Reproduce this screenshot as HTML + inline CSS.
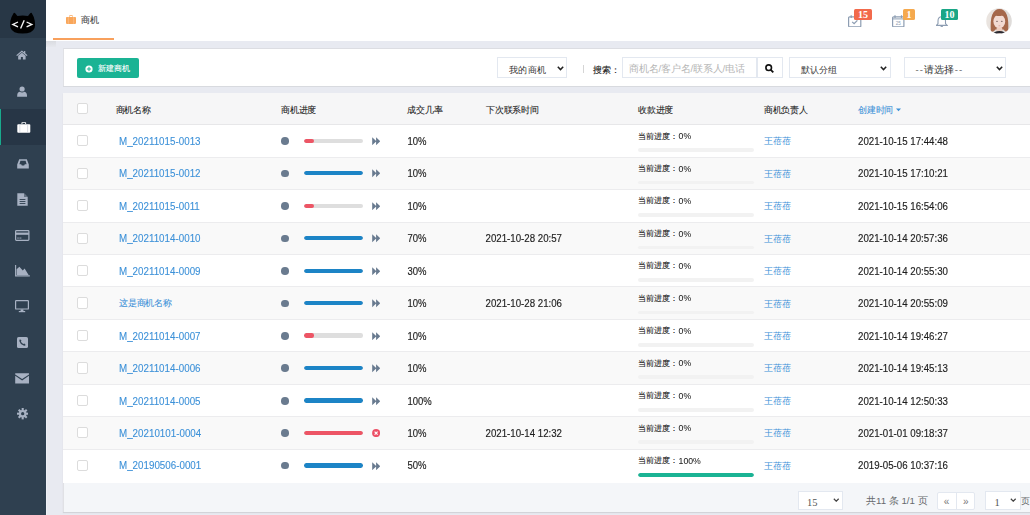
<!DOCTYPE html>
<html><head><meta charset="utf-8">
<style>
*{box-sizing:border-box;margin:0;padding:0}
html,body{width:1030px;height:515px;overflow:hidden}
body{position:relative;background:#e8eaf1;font-family:"Liberation Sans",sans-serif;color:#333;}
.abs{position:absolute}
#side{position:absolute;left:0;top:0;width:46px;height:515px;background:#2f4050}
#logo{position:absolute;left:0;top:0;width:46px;height:38px;background:#283746}
#active{position:absolute;left:0;top:108.8px;width:46px;height:36.4px;background:#273646;border-left:1.2px solid #19aa8d}
#side svg{position:absolute}
#sideline{position:absolute;left:46px;top:40px;width:1px;height:475px;background:#eff1f6}
#header{position:absolute;left:46px;top:0;width:984px;height:40.5px;background:#fff}
#tabline{position:absolute;left:53px;top:38px;width:60.5px;height:1.8px;background:#f8a05c}
#tabtxt{position:absolute;left:81px;top:13.6px;font-size:9.3px;line-height:12px;color:#4a4a4a;-webkit-text-stroke:0.12px}
.badge{position:absolute;height:10.5px;top:9.3px;border-radius:1.5px;color:#fff;font-family:"Liberation Serif",serif;font-weight:bold;font-size:10px;line-height:11.2px;text-align:center}
#shade{position:absolute;left:46px;top:40.5px;width:10px;height:6px;background:linear-gradient(#d9dbe0,#e6e8ee)}
.panel{position:absolute;left:63px;background:#fff;border-top:1px solid #dcdde2;border-left:1px solid #e0e1e5}
#toolbar{top:48px;width:980px;height:38px;box-shadow:0 1px 0 #d8dadf}
#btn{position:absolute;left:77px;top:58.1px;width:62px;height:20px;background:#1ab394;border-radius:2px}
#btntxt{position:absolute;left:98px;top:63.5px;font-size:8.15px;line-height:10px;color:#fff;-webkit-text-stroke:0.1px}
.sel{position:absolute;top:57.2px;height:21.2px;background:#fff;border:1px solid #e3e8f0}
.seltxt{position:absolute;font-size:9.4px;letter-spacing:0.3px;line-height:12px;color:#333}
.chev{position:absolute}
s{text-decoration:none;padding:0 0.2px}
s.d{padding:0;letter-spacing:1px;color:#666}
#tbl{top:93px;width:980px;height:419px;box-shadow:0 1px 1px #d2d4d9}
#thead{position:absolute;left:63px;top:93px;width:967px;height:31.7px;background:#f6f6f7;border-bottom:1px solid #e7e7e9}
.th{position:absolute;top:104.5px;font-size:9px;letter-spacing:-0.25px;line-height:10px;color:#1a1a1a;-webkit-text-stroke:0.08px}
.row{position:absolute;left:63px;width:967px;height:32.46px;border-bottom:1px solid #ececee}
.sy{transform:scaleY(1.1);transform-origin:0 0}
.row>*{position:absolute}
.cb{position:absolute;width:11.2px;height:11.2px;border:1px solid #dcdcdc;border-radius:2px;background:#fff}
.row .cb{left:14px;top:10px}
.nm{left:56px;top:9.7px;font-size:9.8px;line-height:12px;color:#3d91d8;-webkit-text-stroke:0.1px}
.nm.cn{font-size:9px;letter-spacing:-0.25px;-webkit-text-stroke:0.08px;top:9.5px}
.dot{left:218px;top:12.1px;width:7.6px;height:7.6px;border-radius:50%;background:#6a7b8f}
.track{left:241.3px;top:13.6px;width:58.4px;height:4.3px;border-radius:2.2px;background:#dedede;overflow:hidden}
.track b,.ptrack b{display:block;height:100%;border-radius:2.2px}
.ic{left:308.7px;top:11.8px;width:8.4px;height:8.4px}
.rate{left:344.5px;top:9.7px;font-size:9.5px;line-height:12px;color:#1e1e1e;-webkit-text-stroke:0.15px}
.nxt{left:422.5px;top:9.7px;font-size:9.7px;line-height:12px;color:#1e1e1e;-webkit-text-stroke:0.15px}
.payn{left:615.6px;top:5px;font-size:8.7px;line-height:10px;color:#222;transform:scaleY(1.12);transform-origin:0 0;-webkit-text-stroke:0.05px}
.pay{left:575px;top:6.4px;font-size:8px;line-height:10px;color:#222;-webkit-text-stroke:0.1px}
.ptrack{left:575px;top:23.1px;width:116px;height:3.8px;border-radius:2px;background:#f2f2f2;overflow:hidden}
.own{left:700.5px;top:11.1px;font-size:8.6px;line-height:10px;color:#3d91d8}
.ctime{left:795px;top:9.7px;font-size:9.7px;line-height:12px;color:#1e1e1e;-webkit-text-stroke:0.15px}
#foot{position:absolute;left:64px;top:482.7px;width:966px;height:29.3px;background:#f4f6f9}
.pg{position:absolute;background:#fff;border:1px solid #e3e8f0}
</style></head><body>
<div id="side">
  <div id="logo"></div>
  <svg style="left:9px;top:11px" width="28" height="24" viewBox="0 0 28 24">
    <path d="M4.7 2 Q5.5 1.5 6.4 2.5 L8.4 4.9 Q13.6 4.2 19 4.9 L21 2.5 Q21.9 1.5 22.7 2 Q24.8 5 25.8 10 Q26.4 14 25.6 17 Q23.6 22.6 13.6 22.6 Q3.6 22.6 1.6 17 Q0.8 14 1.4 10 Q2.6 5 4.7 2Z" fill="#000"/>
    <path d="M9 11 L3.8 13.45 L9 15.9 M17.6 11 L22.8 13.45 L17.6 15.9" fill="none" stroke="#f2f2f2" stroke-width="1.35"/>
    <path d="M15.2 9.3 L11.6 17.5" stroke="#f2f2f2" stroke-width="1.35"/>
  </svg>
  <div id="active"></div>
  <!-- home -->
  <svg style="left:15.8px;top:50px" width="11.8" height="10" viewBox="0 0 13 11"><path d="M6.5 0.5 L0.3 5.8 L1.2 6.6 L6.5 2.1 L11.8 6.6 L12.7 5.8 L10.2 3.6 L10.2 1 L8.9 1 L8.9 2.5Z M2.4 6.4 L6.5 3 L10.6 6.4 L10.6 10.5 L7.6 10.5 L7.6 7.6 L5.4 7.6 L5.4 10.5 L2.4 10.5Z" fill="#a7b1c2"/></svg>
  <!-- user -->
  <svg style="left:17px;top:85.8px" width="10.2" height="11.2" viewBox="0 0 11 12"><circle cx="5.5" cy="3.2" r="2.8" fill="#a7b1c2"/><path d="M0.2 11.6 Q0 6.8 2.8 6.3 Q5.5 7.8 8.2 6.3 Q11 6.8 10.8 11.6Z" fill="#a7b1c2"/></svg>
  <!-- briefcase -->
  <svg style="left:17px;top:121.6px" width="13.6" height="11" viewBox="0 0 14 12" preserveAspectRatio="none"><path d="M4.6 2.2 L4.6 0.8 Q4.6 0.2 5.2 0.2 L8.8 0.2 Q9.4 0.2 9.4 0.8 L9.4 2.2 L8.4 2.2 L8.4 1.2 L5.6 1.2 L5.6 2.2Z" fill="#fff"/><rect x="0.3" y="2.4" width="13.4" height="9.2" rx="1" fill="#fff"/><rect x="2.6" y="2.4" width="0.7" height="9.2" fill="#c9ccd6"/><rect x="10.7" y="2.4" width="0.7" height="9.2" fill="#c9ccd6"/></svg>
  <!-- inbox -->
  <svg style="left:16.5px;top:158.5px" width="12" height="10" viewBox="0 0 12 10"><path d="M2.2 0.3 L9.8 0.3 L11.8 5.4 L11.8 9.6 L0.2 9.6 L0.2 5.4Z M2.4 5.2 L4.2 5.2 L4.8 6.6 L7.2 6.6 L7.8 5.2 L9.6 5.2 L8.6 1.8 L3.4 1.8Z" fill="#a7b1c2" fill-rule="evenodd"/></svg>
  <!-- file text -->
  <svg style="left:17px;top:193px" width="11" height="13" viewBox="0 0 11 13"><path d="M0.3 0.3 L7 0.3 L10.7 4 L10.7 12.7 L0.3 12.7Z" fill="#a7b1c2"/><path d="M7 0.3 L7 4 L10.7 4Z" fill="#2f4050" opacity="0.55"/><rect x="2.6" y="6" width="5.8" height="0.9" fill="#2f4050"/><rect x="2.6" y="8" width="5.8" height="0.9" fill="#2f4050"/><rect x="2.6" y="10" width="5.8" height="0.9" fill="#2f4050"/></svg>
  <!-- credit card -->
  <svg style="left:15px;top:229.5px" width="14.5" height="11" viewBox="0 0 14.5 11"><rect x="0.6" y="0.6" width="13.3" height="9.8" rx="0.8" fill="none" stroke="#a7b1c2" stroke-width="1.2"/><rect x="0.6" y="2.6" width="13.3" height="2.2" fill="#a7b1c2"/><rect x="2.2" y="7.6" width="1.6" height="0.9" fill="#a7b1c2"/><rect x="4.4" y="7.6" width="2" height="0.9" fill="#a7b1c2"/></svg>
  <!-- area chart -->
  <svg style="left:15px;top:264.5px" width="15" height="12" viewBox="0 0 15 12"><path d="M0.6 0 L0.6 10.9 L14.8 10.9" fill="none" stroke="#a7b1c2" stroke-width="1.1"/><path d="M1.6 10 L1.6 4.2 L4.4 1.8 L7.8 5.4 L9.6 3.4 L13.6 10Z" fill="#a7b1c2"/></svg>
  <!-- desktop -->
  <svg style="left:15.2px;top:300px" width="14" height="12.5" viewBox="0 0 14 12.5"><rect x="0.6" y="0.6" width="12.8" height="8.4" rx="0.6" fill="none" stroke="#a7b1c2" stroke-width="1.2"/><rect x="5.6" y="9.4" width="2.8" height="1.8" fill="#a7b1c2"/><rect x="3.8" y="11" width="6.4" height="1.2" fill="#a7b1c2"/></svg>
  <!-- phone square -->
  <svg style="left:17px;top:336.5px" width="11" height="11" viewBox="0 0 11 11"><rect x="0" y="0" width="11" height="11" rx="1.6" fill="#a7b1c2"/><path d="M3 2.2 Q2.2 2.6 2.4 4.2 Q3.2 7.2 6.6 8.6 Q8 9 8.7 8.1 L7.4 6.6 L6.5 7.1 Q4.6 6.2 3.9 4.5 L4.5 3.6Z" fill="#2f4050"/></svg>
  <!-- envelope -->
  <svg style="left:15.3px;top:373px" width="14.2" height="10.6" viewBox="0 0 14.2 10.6"><path d="M0.2 0.2 L14 0.2 L14 1.4 L7.1 6 L0.2 1.4Z" fill="#a7b1c2"/><path d="M0.2 2.8 L7.1 7.4 L14 2.8 L14 10.4 L0.2 10.4Z" fill="#a7b1c2"/></svg>
  <!-- gear -->
  <svg style="left:16.5px;top:408.2px" width="11.4" height="11.4" viewBox="0 0 12 12"><g fill="#a7b1c2" transform="translate(6 6)"><circle r="4"/><rect x="-1.1" y="-6" width="2.2" height="12"/><rect x="-1.1" y="-6" width="2.2" height="12" transform="rotate(45)"/><rect x="-1.1" y="-6" width="2.2" height="12" transform="rotate(90)"/><rect x="-1.1" y="-6" width="2.2" height="12" transform="rotate(135)"/></g><circle cx="6" cy="6" r="1.7" fill="#2f4050"/></svg>
</div>
<div id="sideline"></div>
<div id="header"></div>
<!-- tab -->
<svg class="abs" style="left:66px;top:15px" width="10" height="9" viewBox="0 0 10 9"><path d="M3.3 1.8 L3.3 0.6 Q3.3 0.2 3.7 0.2 L6.3 0.2 Q6.7 0.2 6.7 0.6 L6.7 1.8 L6 1.8 L6 0.9 L4 0.9 L4 1.8Z" fill="#f9a65a"/><rect x="0" y="1.9" width="10" height="7" rx="0.8" fill="#f9a65a"/><rect x="1.9" y="1.9" width="0.5" height="7" fill="#fcd0a8"/><rect x="7.6" y="1.9" width="0.5" height="7" fill="#fcd0a8"/></svg>
<div id="tabtxt">商机</div>
<div id="tabline"></div>
<!-- top icons -->
<svg class="abs" style="left:848px;top:14.5px" width="13.5" height="12.5" viewBox="0 0 13.5 12.5"><rect x="0.6" y="1.8" width="12.2" height="10.1" rx="1" fill="none" stroke="#8d9db2" stroke-width="1.2"/><path d="M3.2 0.2 L3.2 3 M10.2 0.2 L10.2 3" stroke="#8d9db2" stroke-width="1.2"/><path d="M4.2 6.9 L6.1 8.7 L9.4 5.4" fill="none" stroke="#8d9db2" stroke-width="1.3"/></svg>
<div class="badge" style="left:854.3px;width:17.5px;background:#f26a4c">15</div>
<svg class="abs" style="left:892px;top:14.5px" width="12.5" height="12.5" viewBox="0 0 12.5 12.5"><rect x="0.6" y="1.8" width="11.3" height="10.1" rx="1" fill="none" stroke="#8d9db2" stroke-width="1.2"/><path d="M3 0.2 L3 3 M9.5 0.2 L9.5 3" stroke="#8d9db2" stroke-width="1.2"/><rect x="0.6" y="3.4" width="11.3" height="1" fill="#8d9db2"/><text x="6.25" y="10.4" font-size="4.6" text-anchor="middle" fill="#8d9db2" font-family="Liberation Sans">25</text></svg>
<div class="badge" style="left:902.9px;width:12px;background:#f5a94e">1</div>
<svg class="abs" style="left:936px;top:15.5px" width="11.5" height="11.5" viewBox="0 0 11.5 11.5"><path d="M5.75 0.8 Q2 0.8 2 5 L2 7.6 L0.4 9.4 L11.1 9.4 L9.5 7.6 L9.5 5 Q9.5 0.8 5.75 0.8Z" fill="none" stroke="#8d9db2" stroke-width="1.1"/><path d="M4.6 10.4 L6.9 10.4" stroke="#8d9db2" stroke-width="1.1"/></svg>
<div class="badge" style="left:940.8px;width:17.5px;background:#1aa686">10</div>
<!-- avatar -->
<svg class="abs" style="left:986px;top:8px" width="26" height="26" viewBox="0 0 26 26">
  <defs><clipPath id="cc"><circle cx="13" cy="13" r="12.8"/></clipPath><filter id="bl" x="-10%" y="-10%" width="120%" height="120%"><feGaussianBlur stdDeviation="0.4"/></filter>
  <linearGradient id="avbg" x1="0" x2="1"><stop offset="0" stop-color="#ebe5e0"/><stop offset="1" stop-color="#dedbd9"/></linearGradient></defs>
  <g clip-path="url(#cc)"><g filter="url(#bl)">
    <rect width="26" height="26" fill="url(#avbg)"/>
    <path d="M4.8 23.5 Q4.2 12 6.2 6.8 Q8.6 1 13.4 1 Q18.6 1 20.8 6.8 Q22.8 12 22.2 23.5 Q19.5 24.5 17.5 21.5 L9.5 21.5 Q7.5 24.5 4.8 23.5Z" fill="#a5674c"/>
    <ellipse cx="13.3" cy="13.4" rx="5.9" ry="7" fill="#f2dad2"/>
    <path d="M7.2 10.8 Q7.6 3.6 13.4 3.5 Q19.2 3.6 19.6 10.8 Q18.6 8.2 16.4 7.6 Q13 8.6 9.8 7.6 Q7.9 8.4 7.2 10.8Z" fill="#a5674c"/>
    <ellipse cx="11" cy="13.2" rx="0.9" ry="0.55" fill="#6b5555"/>
    <ellipse cx="15.8" cy="13.2" rx="0.9" ry="0.55" fill="#6b5555"/>
    <ellipse cx="13.4" cy="17.8" rx="1.1" ry="0.5" fill="#dba8a4"/>
    <rect x="10.6" y="19.5" width="5.6" height="4.5" fill="#ecccbf"/>
    <path d="M6.5 26.5 Q8 22.8 13.4 22.9 Q18.8 22.8 20.3 26.5Z" fill="#2c2c32"/>
    <path d="M10 26.5 Q13.4 23.8 16.8 26.5Z" fill="#eccdc0"/>
  </g></g>
</svg>
<div id="shade"></div>
<!-- toolbar -->
<div class="panel" id="toolbar"></div>
<div id="btn"></div>
<svg class="abs" style="left:85.4px;top:64.5px" width="8" height="8" viewBox="0 0 8 8"><circle cx="4" cy="4" r="3.6" fill="#fff"/><path d="M4 1.9 L4 6.1 M1.9 4 L6.1 4" stroke="#1ab394" stroke-width="1"/></svg>
<div id="btntxt">新建商机</div>
<div class="sel" style="left:497.3px;width:70px"></div>
<div class="seltxt" style="left:509px;top:64px">我的商机</div>
<svg class="chev" style="left:557px;top:65.5px" width="7" height="5" viewBox="0 0 7 5"><path d="M0.8 0.8 L3.5 3.6 L6.2 0.8" fill="none" stroke="#222" stroke-width="1.5"/></svg>
<div class="abs" style="left:583px;top:64.6px;width:0.8px;height:8.7px;background:#d5d5d5"></div>
<div class="seltxt" style="left:593px;top:63.5px;font-size:9px;letter-spacing:0;color:#222;-webkit-text-stroke:0.15px">搜索：</div>
<div class="sel" style="left:622.2px;width:135px"></div>
<div class="seltxt" style="left:629px;top:63px;font-size:9.6px;letter-spacing:-0.25px;color:#b5b5b5">商机名<s>/</s>客户名<s>/</s>联系人<s>/</s>电话</div>
<div class="sel" style="left:756.5px;width:26px"></div>
<svg class="abs" style="left:765.2px;top:64px" width="9" height="9" viewBox="0 0 9 9"><circle cx="3.7" cy="3.7" r="2.8" fill="none" stroke="#111" stroke-width="1.6"/><path d="M5.8 5.8 L8.3 8.3" stroke="#111" stroke-width="1.9"/></svg>
<div class="sel" style="left:789.4px;width:102px"></div>
<div class="seltxt" style="left:800.5px;top:64px">默认分组</div>
<svg class="chev" style="left:880px;top:65.5px" width="7" height="5" viewBox="0 0 7 5"><path d="M0.8 0.8 L3.5 3.6 L6.2 0.8" fill="none" stroke="#222" stroke-width="1.5"/></svg>
<div class="sel" style="left:904.4px;width:102px"></div>
<div class="seltxt" style="left:915.5px;top:64px;font-size:9.6px"><s class=d>--</s>请选择<s class=d>--</s></div>
<svg class="chev" style="left:995.5px;top:65.5px" width="7" height="5" viewBox="0 0 7 5"><path d="M0.8 0.8 L3.5 3.6 L6.2 0.8" fill="none" stroke="#222" stroke-width="1.5"/></svg>
<!-- table -->
<div class="panel" id="tbl"></div>
<div id="thead"></div>
<i class="cb" style="left:77px;top:103px"></i>
<div class="th" style="left:115.5px">商机名称</div>
<div class="th" style="left:281px">商机进度</div>
<div class="th" style="left:407.3px">成交几率</div>
<div class="th" style="left:486px">下次联系时间</div>
<div class="th" style="left:638px">收款进度</div>
<div class="th" style="left:763.8px">商机负责人</div>
<div class="th" style="left:858px;color:#3d91d8">创建时间</div>
<svg class="abs" style="left:896px;top:107.5px" width="5" height="4" viewBox="0 0 5 4"><path d="M0 0.5 L5 0.5 L2.5 3.3Z" fill="#3d91d8"/></svg>
<div class="row" style="top:125.14px;background:#fff"><i class="cb"></i><span class="nm sy">M_20211015-0013</span><i class="dot"></i><i class="track"><b style="width:9.5px;background:#ed5565"></b></i><svg class="ic" viewBox="0 0 8.4 8.4"><path d="M0.2 0.2 L4.4 4.2 L0.2 8.2Z M4.1 0.2 L8.3 4.2 L4.1 8.2Z" fill="#687a8f"/></svg><span class="rate sy">10%</span><span class="pay">当前进度：</span><span class="payn">0%</span><i class="ptrack"></i><span class="own">王蓓蓓</span><span class="ctime sy">2021-10-15 17:44:48</span></div>
<div class="row" style="top:157.6px;background:#f9f9f9"><i class="cb"></i><span class="nm sy">M_20211015-0012</span><i class="dot"></i><i class="track"><b style="width:100%;background:#1c84c6"></b></i><svg class="ic" viewBox="0 0 8.4 8.4"><path d="M0.2 0.2 L4.4 4.2 L0.2 8.2Z M4.1 0.2 L8.3 4.2 L4.1 8.2Z" fill="#687a8f"/></svg><span class="rate sy">10%</span><span class="pay">当前进度：</span><span class="payn">0%</span><i class="ptrack"></i><span class="own">王蓓蓓</span><span class="ctime sy">2021-10-15 17:10:21</span></div>
<div class="row" style="top:190.06px;background:#fff"><i class="cb"></i><span class="nm sy">M_20211015-0011</span><i class="dot"></i><i class="track"><b style="width:9.5px;background:#ed5565"></b></i><svg class="ic" viewBox="0 0 8.4 8.4"><path d="M0.2 0.2 L4.4 4.2 L0.2 8.2Z M4.1 0.2 L8.3 4.2 L4.1 8.2Z" fill="#687a8f"/></svg><span class="rate sy">10%</span><span class="pay">当前进度：</span><span class="payn">0%</span><i class="ptrack"></i><span class="own">王蓓蓓</span><span class="ctime sy">2021-10-15 16:54:06</span></div>
<div class="row" style="top:222.51999999999998px;background:#f9f9f9"><i class="cb"></i><span class="nm sy">M_20211014-0010</span><i class="dot"></i><i class="track"><b style="width:100%;background:#1c84c6"></b></i><svg class="ic" viewBox="0 0 8.4 8.4"><path d="M0.2 0.2 L4.4 4.2 L0.2 8.2Z M4.1 0.2 L8.3 4.2 L4.1 8.2Z" fill="#687a8f"/></svg><span class="rate sy">70%</span><span class="nxt sy">2021-10-28 20:57</span><span class="pay">当前进度：</span><span class="payn">0%</span><i class="ptrack"></i><span class="own">王蓓蓓</span><span class="ctime sy">2021-10-14 20:57:36</span></div>
<div class="row" style="top:254.98000000000002px;background:#fff"><i class="cb"></i><span class="nm sy">M_20211014-0009</span><i class="dot"></i><i class="track"><b style="width:100%;background:#1c84c6"></b></i><svg class="ic" viewBox="0 0 8.4 8.4"><path d="M0.2 0.2 L4.4 4.2 L0.2 8.2Z M4.1 0.2 L8.3 4.2 L4.1 8.2Z" fill="#687a8f"/></svg><span class="rate sy">30%</span><span class="pay">当前进度：</span><span class="payn">0%</span><i class="ptrack"></i><span class="own">王蓓蓓</span><span class="ctime sy">2021-10-14 20:55:30</span></div>
<div class="row" style="top:287.44px;background:#f9f9f9"><i class="cb"></i><span class="nm cn">这是商机名称</span><i class="dot"></i><i class="track"><b style="width:100%;background:#1c84c6"></b></i><svg class="ic" viewBox="0 0 8.4 8.4"><path d="M0.2 0.2 L4.4 4.2 L0.2 8.2Z M4.1 0.2 L8.3 4.2 L4.1 8.2Z" fill="#687a8f"/></svg><span class="rate sy">10%</span><span class="nxt sy">2021-10-28 21:06</span><span class="pay">当前进度：</span><span class="payn">0%</span><i class="ptrack"></i><span class="own">王蓓蓓</span><span class="ctime sy">2021-10-14 20:55:09</span></div>
<div class="row" style="top:319.9px;background:#fff"><i class="cb"></i><span class="nm sy">M_20211014-0007</span><i class="dot"></i><i class="track"><b style="width:9.5px;background:#ed5565"></b></i><svg class="ic" viewBox="0 0 8.4 8.4"><path d="M0.2 0.2 L4.4 4.2 L0.2 8.2Z M4.1 0.2 L8.3 4.2 L4.1 8.2Z" fill="#687a8f"/></svg><span class="rate sy">10%</span><span class="pay">当前进度：</span><span class="payn">0%</span><i class="ptrack"></i><span class="own">王蓓蓓</span><span class="ctime sy">2021-10-14 19:46:27</span></div>
<div class="row" style="top:352.36px;background:#f9f9f9"><i class="cb"></i><span class="nm sy">M_20211014-0006</span><i class="dot"></i><i class="track"><b style="width:100%;background:#1c84c6"></b></i><svg class="ic" viewBox="0 0 8.4 8.4"><path d="M0.2 0.2 L4.4 4.2 L0.2 8.2Z M4.1 0.2 L8.3 4.2 L4.1 8.2Z" fill="#687a8f"/></svg><span class="rate sy">10%</span><span class="pay">当前进度：</span><span class="payn">0%</span><i class="ptrack"></i><span class="own">王蓓蓓</span><span class="ctime sy">2021-10-14 19:45:13</span></div>
<div class="row" style="top:384.82px;background:#fff"><i class="cb"></i><span class="nm sy">M_20211014-0005</span><i class="dot"></i><i class="track"><b style="width:100%;background:#1c84c6"></b></i><svg class="ic" viewBox="0 0 8.4 8.4"><path d="M0.2 0.2 L4.4 4.2 L0.2 8.2Z M4.1 0.2 L8.3 4.2 L4.1 8.2Z" fill="#687a8f"/></svg><span class="rate sy">100%</span><span class="pay">当前进度：</span><span class="payn">0%</span><i class="ptrack"></i><span class="own">王蓓蓓</span><span class="ctime sy">2021-10-14 12:50:33</span></div>
<div class="row" style="top:417.28px;background:#f9f9f9"><i class="cb"></i><span class="nm sy">M_20210101-0004</span><i class="dot"></i><i class="track"><b style="width:100%;background:#ed5565"></b></i><svg class="ic" style="top:11.4px" viewBox="0 0 8.4 8.4"><circle cx="4.1" cy="4.1" r="4" fill="#ec5066"/><path d="M2.6 2.6 L5.6 5.6 M5.6 2.6 L2.6 5.6" stroke="#fff" stroke-width="1.2"/></svg><span class="rate sy">10%</span><span class="nxt sy">2021-10-14 12:32</span><span class="pay">当前进度：</span><span class="payn">0%</span><i class="ptrack"></i><span class="own">王蓓蓓</span><span class="ctime sy">2021-01-01 09:18:37</span></div>
<div class="row" style="top:449.74px;background:#fff;border-bottom:0;height:33px"><i class="cb"></i><span class="nm sy">M_20190506-0001</span><i class="dot"></i><i class="track"><b style="width:100%;background:#1c84c6"></b></i><svg class="ic" viewBox="0 0 8.4 8.4"><path d="M0.2 0.2 L4.4 4.2 L0.2 8.2Z M4.1 0.2 L8.3 4.2 L4.1 8.2Z" fill="#687a8f"/></svg><span class="rate sy">50%</span><span class="pay">当前进度：</span><span class="payn">100%</span><i class="ptrack"><b style="width:100%;background:#1ab394"></b></i><span class="own">王蓓蓓</span><span class="ctime sy">2019-05-06 10:37:16</span></div>
<div id="foot"></div>
<div class="pg" style="left:797.5px;top:490.5px;width:45px;height:19.3px"></div>
<div class="abs" style="left:807px;top:496.8px;font-family:'Liberation Serif',serif;font-size:10.5px;line-height:12px;color:#555">15</div>
<svg class="chev" style="left:833px;top:497.5px" width="6.5" height="4.5" viewBox="0 0 7 5"><path d="M0.8 0.8 L3.5 3.6 L6.2 0.8" fill="none" stroke="#444" stroke-width="1.3"/></svg>
<div class="abs" style="left:866px;top:495px;font-size:9.7px;line-height:11px;color:#676a6c">共11 条 1/1 页</div>
<div class="pg" style="left:937.3px;top:491.7px;width:37.3px;height:18.1px;border-radius:2px"></div>
<div class="abs" style="left:956px;top:492px;width:1px;height:17.5px;background:#e3e8f0"></div>
<div class="abs" style="left:943.8px;top:495.5px;font-size:10px;line-height:12px;color:#777">«</div>
<div class="abs" style="left:963px;top:495.5px;font-size:10px;line-height:12px;color:#777">»</div>
<div class="pg" style="left:985.3px;top:490.5px;width:35.5px;height:19.3px"></div>
<div class="abs" style="left:994.5px;top:496.8px;font-family:'Liberation Serif',serif;font-size:10.5px;line-height:12px;color:#555">1</div>
<svg class="chev" style="left:1010px;top:497.5px" width="6.5" height="4.5" viewBox="0 0 7 5"><path d="M0.8 0.8 L3.5 3.6 L6.2 0.8" fill="none" stroke="#444" stroke-width="1.3"/></svg>
<div class="abs" style="left:1021px;top:495px;font-size:9.4px;line-height:11px;color:#676a6c">页</div>
</body></html>
